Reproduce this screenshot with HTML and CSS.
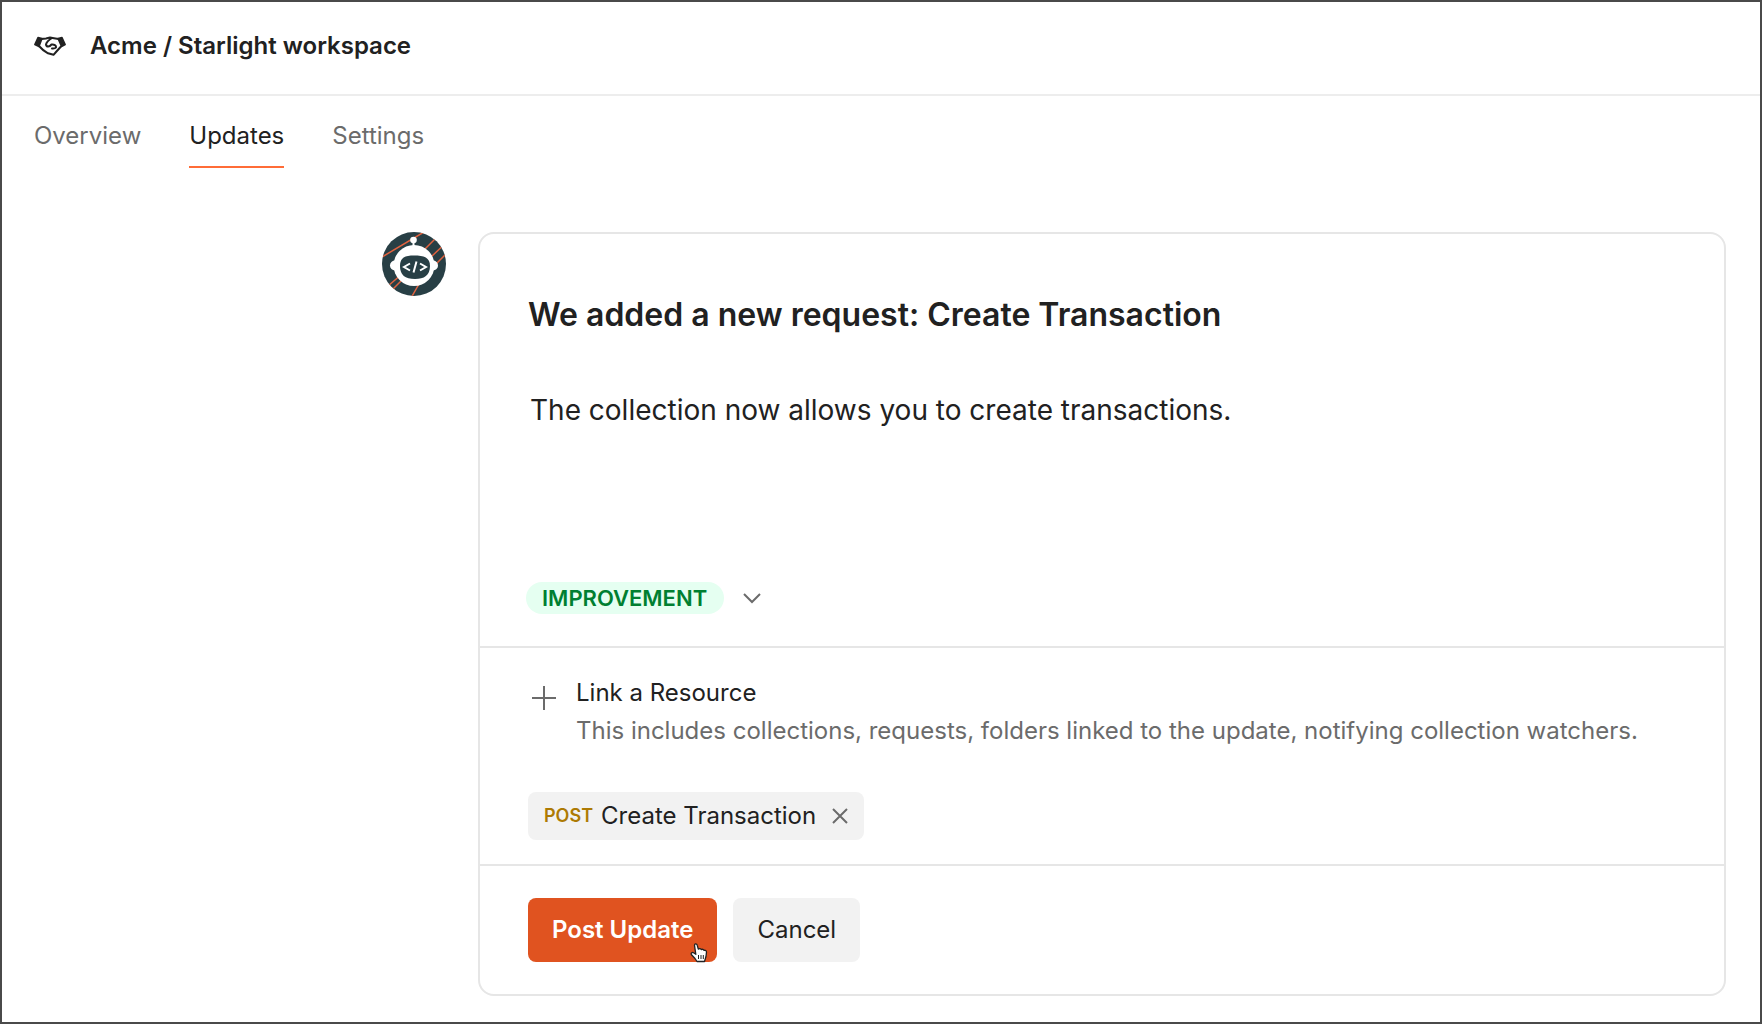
FILE: index.html
```html
<!DOCTYPE html>
<html lang="en">
<head>
<meta charset="utf-8">
<meta name="viewport" content="width=device-width, initial-scale=1">
<title>Acme / Starlight workspace</title>
<link rel="stylesheet" href="styles.css">
</head>
<body>
<div class="app">
  <header class="header">
    <svg class="header-icon" viewBox="0 0 32 20" width="32" height="20" aria-hidden="true">
      <path d="M4 1.500 8 2.500 5 10.500 0.800 8.500Z M28 1.500 24 2.500 27.500 10.500 31.200 8.500Z" fill="#212121" stroke="#212121" stroke-width="1.500" stroke-linejoin="round"/>
      <path d="M7.500 3 12 2.500 16 1.500 20 2.200 24.500 3 M18 2 C15.500 3.500 12.500 6 12 8.500 C12.500 11.500 15.500 10.800 17.500 8.500 C20 8 22.500 9.500 22 11.500 C21 12.800 19.500 12.500 18 12.500 M5 10 C8 13.500 11 15.800 14 17.300 L19.500 18.800 22 16 27 10.500" fill="none" stroke="#212121" stroke-width="2" stroke-linejoin="round" stroke-linecap="round"/>
    </svg>
    <h1 class="header-title">Acme / Starlight workspace</h1>
  </header>
  <nav class="tabs" aria-label="Workspace">
    <a class="tab" href="#overview">Overview</a>
    <a class="tab tab-active" href="#updates" aria-current="page">Updates</a>
    <a class="tab" href="#settings">Settings</a>
  </nav>
  <main class="content">
    <svg class="avatar" viewBox="0 0 64 64" width="64" height="64" role="img" aria-label="Team avatar">
      <defs><clipPath id="disc"><circle cx="32" cy="32" r="32"/></clipPath></defs>
      <g clip-path="url(#disc)">
        <path fill="#283f45" d="M0 0h64v64H0z"/>
        <path d="M0 25 42 0 M42 18 54 6 M50 24 66 9 M54 32 66 20 M6 54 20 42 M10 58 22 46 M29 66 37 52" stroke="#e0623f" stroke-width="1.500" fill="none"/>
        <path d="M31.500 8v8" stroke="#fff" stroke-width="2"/>
        <circle cx="31.500" cy="8" r="3.300" fill="#fff"/>
        <ellipse cx="32" cy="33.500" rx="20.500" ry="20.500" fill="#fff"/>
        <rect x="8" y="28.500" width="48" height="10" rx="5" fill="#fff"/>
        <path d="M32 23.500 C42 23.500 48 25.500 48 34 C48 43.500 42 47 33 47 C23 47 18 43 18 34 C18 25.500 23 23.500 32 23.500Z" fill="#283f45"/>
        <path d="M28 31.500 22 35 28 38.500 M38 31.500 44 35 38 38.500 M34.500 29.500 31.500 40.500" stroke="#fff" stroke-width="2" fill="none"/>
      </g>
    </svg>
    <form class="card">
      <section class="card-section editor">
        <input class="title-input" type="text" aria-label="Update title" value="We added a new request: Create Transaction">
        <textarea class="body-input" aria-label="Update description">The collection now allows you to create transactions.</textarea>
        <label class="type-picker">
          <select class="type-select" aria-label="Update type"><option>IMPROVEMENT</option></select>
          <svg viewBox="0 0 20 12" width="20" height="12" aria-hidden="true"><path d="M2 2 10 10 18 2" fill="none" stroke="#6b6b6b" stroke-width="2"/></svg>
        </label>
      </section>
      <section class="card-section resources">
        <button class="link-resource" type="button">
          <svg class="link-icon" viewBox="0 0 24 24" width="24" height="24" aria-hidden="true"><path d="M12 0v24M0 12h24" stroke="#6b6b6b" stroke-width="2"/></svg>
          <span class="link-text">
            <span class="link-title">Link a Resource</span>
            <span class="link-hint">This includes collections, requests, folders linked to the update, notifying collection watchers.</span>
          </span>
        </button>
        <div class="chip">
          <span class="chip-method">POST</span>
          <span class="chip-name">Create Transaction</span>
          <button class="chip-remove" type="button" aria-label="Remove Create Transaction">
            <svg viewBox="0 0 16 16" width="16" height="16" aria-hidden="true"><path d="M1 1 15 15M15 1 1 15" stroke="#6b6b6b" stroke-width="2"/></svg>
          </button>
        </div>
      </section>
      <section class="card-section actions">
        <button class="button button-primary" type="button">Post Update
          <svg class="pointer" viewBox="0 0 18 20" width="18" height="20" aria-hidden="true">
            <path d="M4.500 2.300C4.500 0.500 6.800 0.500 7.200 2.200L8.300 6.200C9.500 5.300 10.800 5.700 11.200 6.600C12.300 5.900 13.500 6.300 13.900 7.400C15.300 6.900 16.500 7.800 16.500 9.200L16 13.500 14.500 18.500H7L5 15.500 1.300 11.500C0.700 10 2.300 9 3.500 9.800L5.800 11.300Z" fill="#fff" stroke="#222" stroke-width="1.300" stroke-linejoin="round"/>
            <path d="M8.500 12v4M11 12v4M13.300 12v4" stroke="#222"/>
          </svg>
        </button>
        <button class="button" type="button">Cancel</button>
      </section>
    </form>
  </main>
</div>
</body>
</html>
```
FILE: styles.css
```css
* { box-sizing: border-box; }

body {
  margin: 0;
  font-family: Inter, "Liberation Sans", sans-serif;
  font-size: 24px;
  line-height: 32px;
  color: #212121;
  background: #fff;
}

button, input, select, textarea {
  font: inherit;
  color: inherit;
  margin: 0;
  padding: 0;
  border: 0;
  background: none;
}

svg { flex: none; display: block; }

.app {
  min-height: 100vh;
  border: 2px solid #4a4a4a;
}

.header {
  display: flex;
  align-items: center;
  gap: 24px;
  padding: 28px 32px 32px;
  border-bottom: 2px solid #ededed;
}

.header-title {
  margin: 0;
  font-size: 24px;
  font-weight: 600;
}

.tabs {
  display: flex;
  gap: 48px;
  padding: 0 32px;
}

.tab {
  padding: 24px 0 14px;
  border-bottom: 2px solid transparent;
  color: #6b6b6b;
  text-decoration: none;
}

.tab-active {
  color: #212121;
  border-color: #ff6c37;
}

.content {
  display: flex;
  align-items: flex-start;
  gap: 32px;
  padding: 64px 34px 26px 380px;
}

.card {
  flex: 1;
  min-width: 0;
  border: 2px solid #e6e6e6;
  border-radius: 16px;
}

.card-section { padding: 32px 48px; }
.card-section + .card-section { border-top: 2px solid #e6e6e6; }

.editor {
  display: flex;
  flex-direction: column;
  padding-top: 60px;
}

.title-input {
  width: 100%;
  height: 40px;
  font-size: 32px;
  font-weight: 600;
}

.body-input {
  height: 192px;
  margin: 56px 0 0 2px;
  font-size: 28px;
  line-height: 40px;
  resize: none;
}

.type-picker {
  align-self: flex-start;
  display: flex;
  align-items: center;
  gap: 18px;
  margin-left: -2px;
}

.type-select {
  appearance: none;
  height: 32px;
  padding: 0 16px;
  border-radius: 16px;
  background: #e5fff1;
  color: #007f31;
  font-size: 22px;
  font-weight: 600;
}

.resources {
  display: flex;
  flex-direction: column;
  align-items: flex-start;
  gap: 45px;
  padding-top: 29px;
  padding-bottom: 24px;
}

.link-resource {
  display: flex;
  align-items: flex-start;
  gap: 20px;
  padding-left: 4px;
  text-align: left;
}

.link-icon { margin-top: 9px; }
.link-text { display: flex; flex-direction: column; gap: 6px; }
.link-hint { color: #6b6b6b; }

.chip {
  display: flex;
  align-items: center;
  height: 48px;
  padding: 0 16px;
  gap: 8px;
  border-radius: 8px;
  background: #f2f2f2;
}

.chip-method {
  color: #ad7a03;
  font-size: 18px;
  font-weight: 600;
}

.chip-remove { margin-left: 8px; }

.actions { display: flex; gap: 16px; }

.button {
  position: relative;
  height: 64px;
  padding: 0 24px;
  border-radius: 8px;
  background: #f2f2f2;
}

.button-primary {
  background: #e05320;
  color: #fff;
  font-weight: 600;
}

.pointer {
  position: absolute;
  right: 9px;
  bottom: -1px;
}
```
